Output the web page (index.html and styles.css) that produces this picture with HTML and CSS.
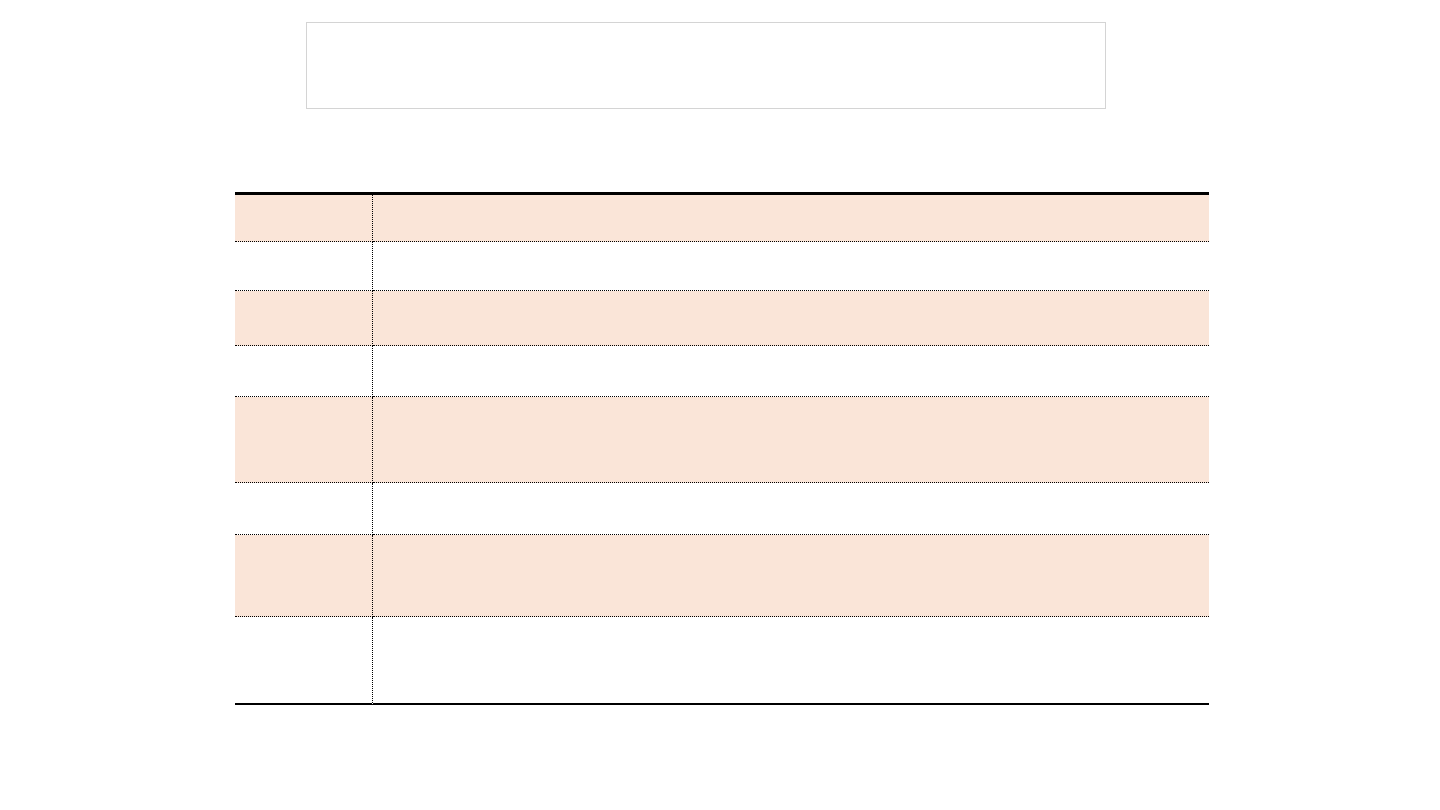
FILE: index.html
```html
<!DOCTYPE html>
<html lang="en">
<head>
  <meta charset="UTF-8">
  <title>Table</title>
  <link rel="stylesheet" href="styles.css">
</head>
<body>

<div class="banner"></div>

<table class="grid">
  <tr class="tint h47"><td class="key"></td><td></td></tr>
  <tr class="h49"><td class="key"></td><td></td></tr>
  <tr class="tint h55"><td class="key"></td><td></td></tr>
  <tr class="h51"><td class="key"></td><td></td></tr>
  <tr class="tint h86"><td class="key"></td><td></td></tr>
  <tr class="h52"><td class="key"></td><td></td></tr>
  <tr class="tint h82"><td class="key"></td><td></td></tr>
  <tr class="last h88"><td class="key"></td><td></td></tr>
</table>

</body>
</html>
```

FILE: styles.css
```css
body {
  margin: 0;
  font-family: 'Liberation Sans', Arial, sans-serif;
  background: #fff;
}

.banner {
  width: 798px;
  height: 85px;
  margin: 22px 0 0 306px;
  border: 1px solid #d4d4d4;
}

.grid {
  margin: 83px 0 0 235px;
  width: 974px;
  border-collapse: separate;
  border-spacing: 0;
  border-top: 3px solid #000;
}

.grid td {
  box-sizing: border-box;
  padding: 0;
  border-bottom: 1px dotted #000;
}

.grid td.key {
  width: 138px;
  border-right: 1px dotted #000;
}

.grid tr.last td {
  border-bottom: 2px solid #000;
}

.tint td {
  background: #fae5d8;
}

.h47 td { height: 47px; }
.h49 td { height: 49px; }
.h55 td { height: 55px; }
.h51 td { height: 51px; }
.h86 td { height: 86px; }
.h52 td { height: 52px; }
.h82 td { height: 82px; }
.h88 td { height: 88px; }
```
